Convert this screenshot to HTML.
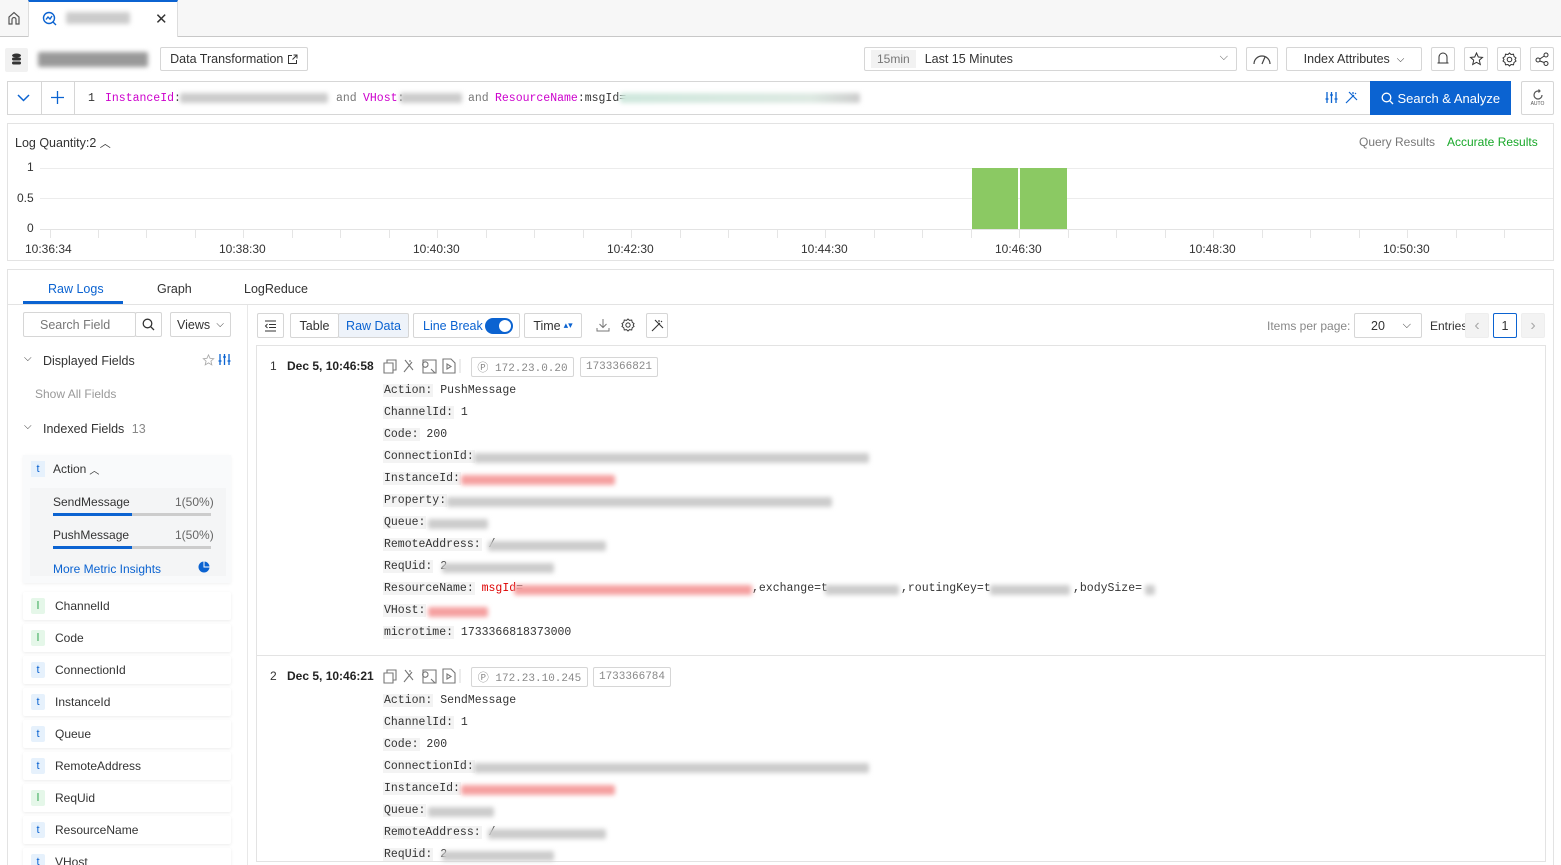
<!DOCTYPE html>
<html style="width:1561px;height:865px;overflow:hidden"><head><meta charset="utf-8"><style>
*{box-sizing:border-box;margin:0;padding:0}
body{width:1561px;height:865px;overflow:hidden;background:#fff;font-family:"Liberation Sans",sans-serif;font-size:12px;color:#333}
#w{position:relative;width:1561px;height:865px;overflow:hidden}
.a{position:absolute}
.mono{font-family:"Liberation Mono",monospace;font-size:11.5px}
.blur{position:absolute;filter:blur(2.5px);border-radius:2px}
.btn{position:absolute;border:1px solid #d6d6d6;background:#fff;border-radius:2px;display:flex;align-items:center;justify-content:center;font-size:12.5px;color:#333}
.k{background:#f3f3f3;padding:0 1px}
.ln{position:absolute;left:383px;height:20px;line-height:20px;white-space:nowrap}
.fld{position:absolute;left:23px;width:208px;height:28px;background:#fff;box-shadow:0 1px 3px rgba(0,0,0,.08);display:flex;align-items:center;font-size:12px;border-radius:2px}
.fld b{font-weight:normal;display:inline-block;width:14px;height:16px;margin:0 10px 0 8px;text-align:center;line-height:16px;font-size:11px;border-radius:2px}
.t b{background:#e6f1fc;color:#0b63d1}
.l b{background:#e5f7e9;color:#2aa34a}
.tick{position:absolute;top:230px;width:1px;height:8px;background:#e5e5e5}
.ic{position:absolute;display:flex;gap:4px}
</style></head><body><div id="w">
<!-- tab bar -->
<div class="a" style="left:0;top:0;width:1561px;height:37px;background:#f7f7f7;border-bottom:1px solid #c8c8c8"></div>
<div class="a" style="left:0;top:0;width:28px;height:36px;display:flex;align-items:center;justify-content:center">
<svg width="14" height="14" viewBox="0 0 14 14" fill="none" stroke="#555" stroke-width="1.2"><path d="M2 13V6L7 1.5L12 6V13H9V8.5A2 2 0 0 0 5 8.5V13Z"/></svg></div>
<div class="a" style="left:28px;top:0;width:150px;height:37px;background:#fff;border-top:2px solid #0b63d1;border-left:1px solid #ddd;border-right:1px solid #ddd"></div>
<svg class="a" style="left:42px;top:11px" width="16" height="16" viewBox="0 0 16 16" fill="none" stroke="#0b63d1" stroke-width="1.4"><circle cx="7" cy="7" r="5.5"/><path d="M4 8.5L6 6L8 8L10 5M11 11L14 14"/></svg>
<div class="blur" style="left:66px;top:12px;width:64px;height:12px;background:#ccc"></div>
<div class="a" style="left:155px;top:10px;font-size:15px;color:#333">✕</div>
<!-- row 2 -->
<div class="a" style="left:5px;top:48px;width:23px;height:24px;background:#f1f1f1;border-radius:2px"></div>
<svg class="a" style="left:11px;top:53px" width="11" height="14" viewBox="0 0 11 14" fill="#333"><ellipse cx="5.5" cy="2.5" rx="4.5" ry="2"/><rect x="1" y="4.5" width="9" height="3" rx="1.5"/><rect x="1" y="8.5" width="9" height="3" rx="1.5"/></svg>
<div class="blur" style="left:38px;top:52px;width:110px;height:15px;background:#999"></div>
<div class="btn" style="left:160px;top:47px;width:148px;height:24px;font-size:12.5px">Data Transformation&nbsp;<svg width="11" height="11" viewBox="0 0 11 11" fill="none" stroke="#333"><path d="M5 1.5H1.5V9.5H9.5V6M6.5 1H10V4.5M10 1L5.5 5.5"/></svg></div>
<div class="btn" style="left:864px;top:47px;width:373px;height:24px;justify-content:flex-start;padding-left:6px"><span style="background:#f2f2f2;color:#777;padding:2px 6px;font-size:12px">15min</span><span style="margin-left:9px">Last 15 Minutes</span><span style="position:absolute;right:8px;top:3px;font-size:11px;color:#555">⌵</span></div>
<div class="btn" style="left:1246px;top:47px;width:32px;height:24px"><svg width="20" height="14" viewBox="0 0 20 14" fill="none" stroke="#444" stroke-width="1.2"><path d="M2 12A8 8 0 0 1 18 12M10 12L13 5"/></svg></div>
<div class="btn" style="left:1286px;top:47px;width:136px;height:24px">Index Attributes&nbsp;&nbsp;<span style="font-size:10px">⌵</span></div>
<div class="btn" style="left:1431px;top:47px;width:24px;height:24px"><svg width="12" height="14" viewBox="0 0 12 14" fill="none" stroke="#333"><path d="M2 11V5A4 4 0 0 1 10 5V11ZM0.5 11H11.5"/></svg></div>
<div class="btn" style="left:1464px;top:47px;width:24px;height:24px"><svg width="15" height="15" viewBox="0 0 15 15" fill="none" stroke="#333"><path d="M7.5 1L9.3 5L13.5 5.4L10.3 8.2L11.3 12.5L7.5 10.3L3.7 12.5L4.7 8.2L1.5 5.4L5.7 5Z"/></svg></div>
<div class="btn" style="left:1497px;top:47px;width:24px;height:24px"><svg width="15" height="15" viewBox="0 0 15 15" fill="none" stroke="#333"><circle cx="7.5" cy="7.5" r="2.3"/><path d="M7.5 1L9 2.5L11.5 2.2L12 4.5L14 6L13 7.5L14 9L12 10.5L11.5 12.8L9 12.5L7.5 14L6 12.5L3.5 12.8L3 10.5L1 9L2 7.5L1 6L3 4.5L3.5 2.2L6 2.5Z"/></svg></div>
<div class="btn" style="left:1530px;top:47px;width:24px;height:24px"><svg width="14" height="14" viewBox="0 0 14 14" fill="none" stroke="#333"><circle cx="3" cy="8" r="2"/><circle cx="11" cy="3" r="2"/><circle cx="11" cy="11.5" r="2"/><path d="M4.8 7L9.2 4M4.8 9L9.2 10.5"/></svg></div>
<!-- query bar -->
<div class="a" style="left:7px;top:81px;width:1364px;height:34px;border:1px solid #d6d6d6;border-right:none"></div>
<div class="a" style="left:41px;top:81px;width:1px;height:34px;background:#d6d6d6"></div>
<div class="a" style="left:74px;top:81px;width:1px;height:34px;background:#d6d6d6"></div>
<svg class="a" style="left:17px;top:93px" width="13" height="10" viewBox="0 0 13 10" fill="none" stroke="#0b63d1" stroke-width="1.5"><path d="M1 2L6.5 7.5L12 2"/></svg>
<svg class="a" style="left:51px;top:91px" width="13" height="13" viewBox="0 0 13 13" fill="none" stroke="#0b63d1" stroke-width="1.3"><path d="M6.5 0V13M0 6.5H13"/></svg>
<div class="a mono" style="left:88px;top:92px;white-space:nowrap">1</div>
<div class="a mono" style="left:105px;top:92px;white-space:nowrap;color:#c0c">InstanceId<span style="color:#333">:</span></div>
<div class="a mono" style="left:336px;top:92px;color:#777">and</div>
<div class="a mono" style="left:363px;top:92px;color:#c0c">VHost<span style="color:#333">:</span></div>
<div class="a mono" style="left:468px;top:92px;color:#777">and</div>
<div class="a mono" style="left:495px;top:92px;color:#c0c">ResourceName<span style="color:#333">:msgId=</span></div>
<div class="blur" style="left:180px;top:93px;width:148px;height:10px;background:#ccc"></div>
<div class="blur" style="left:400px;top:93px;width:62px;height:10px;background:#ccc"></div>
<div class="blur" style="left:620px;top:93px;width:240px;height:10px;background:linear-gradient(90deg,#cfe8dd,#dde9e2 80%,#ccc)"></div>
<svg class="a" style="left:1325px;top:91px" width="13" height="13" viewBox="0 0 13 13" fill="none" stroke="#0b63d1" stroke-width="1.3"><path d="M2 1V12M6.5 1V12M11 1V12M0.5 8H3.5M5 4H8M9.5 8H12.5"/></svg>
<svg class="a" style="left:1345px;top:91px" width="13" height="13" viewBox="0 0 13 13" fill="none" stroke="#0b63d1" stroke-width="1.2"><path d="M1 12L9 4M4 1L12 9M8 1V3M10 2L11 3"/></svg>
<div class="a" style="left:1370px;top:81px;width:141px;height:34px;background:#0b63d1;color:#fff;font-size:13px;display:flex;align-items:center;justify-content:center"><svg width="13" height="13" viewBox="0 0 13 13" fill="none" stroke="#fff" stroke-width="1.3"><circle cx="5.5" cy="5.5" r="4.3"/><path d="M8.7 8.7L12 12"/></svg>&nbsp;Search &amp; Analyze</div>
<div class="btn" style="left:1521px;top:81px;width:33px;height:34px;flex-direction:column"><svg width="12" height="12" viewBox="0 0 12 12" fill="none" stroke="#555" stroke-width="1.2"><path d="M10 6A4 4 0 1 1 6 2H8M6.5 0.5L8 2L6.5 3.5"/></svg><span style="font-size:5px;color:#555">AUTO</span></div>
<!-- chart -->
<div class="a" style="left:7px;top:123px;width:1547px;height:138px;border:1px solid #e3e3e3"></div>
<div class="a" style="left:15px;top:135px;font-size:12.5px">Log Quantity:2 <span style="font-size:11px">︿</span></div>
<div class="a" style="left:1359px;top:135px;color:#777">Query Results</div>
<div class="a" style="left:1447px;top:135px;color:#18a829">Accurate Results</div>
<div class="a" style="left:27px;top:160px">1</div>
<div class="a" style="left:17px;top:191px">0.5</div>
<div class="a" style="left:27px;top:221px">0</div>
<div class="a" style="left:40px;top:168px;width:1513px;height:1px;background:#ececec"></div>
<div class="a" style="left:40px;top:198px;width:1513px;height:1px;background:#ececec"></div>
<div class="a" style="left:40px;top:229px;width:1513px;height:1px;background:#e3e3e3"></div>
<div class="a" style="left:972px;top:168px;width:46px;height:61px;background:#8bc963"></div>
<div class="a" style="left:1020px;top:168px;width:47px;height:61px;background:#8bc963"></div>
<div class="a" style="left:25px;top:242px;white-space:nowrap;width:1460px;font-size:12px;color:#333">
<span class="a" style="left:0">10:36:34</span><span class="a" style="left:194px">10:38:30</span><span class="a" style="left:388px">10:40:30</span><span class="a" style="left:582px">10:42:30</span><span class="a" style="left:776px">10:44:30</span><span class="a" style="left:970px">10:46:30</span><span class="a" style="left:1164px">10:48:30</span><span class="a" style="left:1358px">10:50:30</span></div>
<div class="tick" style="left:50px"></div><div class="tick" style="left:98px"></div><div class="tick" style="left:146px"></div><div class="tick" style="left:195px"></div><div class="tick" style="left:243px"></div><div class="tick" style="left:292px"></div><div class="tick" style="left:340px"></div><div class="tick" style="left:389px"></div><div class="tick" style="left:437px"></div><div class="tick" style="left:486px"></div><div class="tick" style="left:534px"></div><div class="tick" style="left:583px"></div><div class="tick" style="left:631px"></div><div class="tick" style="left:680px"></div><div class="tick" style="left:728px"></div><div class="tick" style="left:777px"></div><div class="tick" style="left:825px"></div><div class="tick" style="left:874px"></div><div class="tick" style="left:922px"></div><div class="tick" style="left:971px"></div><div class="tick" style="left:1019px"></div><div class="tick" style="left:1068px"></div><div class="tick" style="left:1116px"></div><div class="tick" style="left:1165px"></div><div class="tick" style="left:1213px"></div><div class="tick" style="left:1262px"></div><div class="tick" style="left:1310px"></div><div class="tick" style="left:1359px"></div><div class="tick" style="left:1407px"></div><div class="tick" style="left:1456px"></div><div class="tick" style="left:1504px"></div>
<!-- lower panel -->
<div class="a" style="left:7px;top:269px;width:1547px;height:620px;border:1px solid #e3e3e3"></div>
<div class="a" style="left:8px;top:304px;width:1545px;height:1px;background:#e3e3e3"></div>
<div class="a" style="left:48px;top:282px;color:#0b63d1;font-size:12.5px">Raw Logs</div>
<div class="a" style="left:23px;top:301px;width:100px;height:3px;background:#0b63d1"></div>
<div class="a" style="left:157px;top:282px;font-size:12.5px">Graph</div>
<div class="a" style="left:244px;top:282px;font-size:12.5px">LogReduce</div>
<div class="a" style="left:247px;top:305px;width:1px;height:560px;background:#e8e8e8"></div>
<!-- sidebar -->
<div class="btn" style="left:23px;top:312px;width:113px;height:25px;justify-content:flex-start;padding-left:16px;color:#777">Search Field</div>
<div class="btn" style="left:135px;top:312px;width:27px;height:25px"><svg width="13" height="13" viewBox="0 0 13 13" fill="none" stroke="#333" stroke-width="1.3"><circle cx="5.5" cy="5.5" r="4.3"/><path d="M8.7 8.7L12 12"/></svg></div>
<div class="btn" style="left:170px;top:312px;width:61px;height:25px;justify-content:space-between;padding:0 6px">Views <span style="font-size:10px">⌵</span></div>
<div class="a" style="left:24px;top:353px;font-size:10px">⌵</div>
<div class="a" style="left:43px;top:354px;font-size:12.5px">Displayed Fields</div>
<svg class="a" style="left:202px;top:354px" width="13" height="13" viewBox="0 0 15 15" fill="none" stroke="#aaa"><path d="M7.5 1L9.3 5L13.5 5.4L10.3 8.2L11.3 12.5L7.5 10.3L3.7 12.5L4.7 8.2L1.5 5.4L5.7 5Z"/></svg>
<svg class="a" style="left:218px;top:353px" width="13" height="13" viewBox="0 0 13 13" fill="none" stroke="#0b63d1" stroke-width="1.3"><path d="M2 1V12M6.5 1V12M11 1V12M0.5 8H3.5M5 4H8M9.5 8H12.5"/></svg>
<div class="a" style="left:35px;top:387px;color:#999">Show All Fields</div>
<div class="a" style="left:24px;top:421px;font-size:10px">⌵</div>
<div class="a" style="left:43px;top:422px;font-size:12.5px">Indexed Fields <span style="color:#888;margin-left:4px">13</span></div>
<div class="a" style="left:23px;top:455px;width:208px;height:128px;background:#f9fafb;box-shadow:0 1px 3px rgba(0,0,0,.06)"></div>
<div class="a" style="left:23px;top:458px;width:208px;height:22px;display:flex;align-items:center"><span style="display:inline-block;width:14px;height:16px;margin:0 8px 0 8px;text-align:center;line-height:16px;font-size:11px;background:#e6f1fc;color:#0b63d1">t</span>Action <span style="font-size:10px;margin-left:3px">︿</span></div>
<div class="a" style="left:30px;top:488px;width:196px;height:88px;background:#f4f5f6"></div>
<div class="a" style="left:53px;top:495px">SendMessage</div><div class="a" style="left:175px;top:495px;color:#666">1(50%)</div>
<div class="a" style="left:53px;top:513px;width:158px;height:3px;background:#ccc"></div><div class="a" style="left:53px;top:513px;width:79px;height:3px;background:#0b63d1"></div>
<div class="a" style="left:53px;top:528px">PushMessage</div><div class="a" style="left:175px;top:528px;color:#666">1(50%)</div>
<div class="a" style="left:53px;top:546px;width:158px;height:3px;background:#ccc"></div><div class="a" style="left:53px;top:546px;width:79px;height:3px;background:#0b63d1"></div>
<div class="a" style="left:53px;top:562px;color:#0b63d1">More Metric Insights</div>
<svg class="a" style="left:198px;top:561px" width="12" height="12" viewBox="0 0 12 12"><circle cx="6" cy="6" r="5.5" fill="#0b63d1"/><path d="M6 0.5V6H11.5" stroke="#fff" fill="none"/></svg>
<div class="fld l" style="top:592px"><b>l</b>ChannelId</div>
<div class="fld l" style="top:624px"><b>l</b>Code</div>
<div class="fld t" style="top:656px"><b>t</b>ConnectionId</div>
<div class="fld t" style="top:688px"><b>t</b>InstanceId</div>
<div class="fld t" style="top:720px"><b>t</b>Queue</div>
<div class="fld t" style="top:752px"><b>t</b>RemoteAddress</div>
<div class="fld l" style="top:784px"><b>l</b>ReqUid</div>
<div class="fld t" style="top:816px"><b>t</b>ResourceName</div>
<div class="fld t" style="top:848px"><b>t</b>VHost</div>
<!-- toolbar -->
<div class="btn" style="left:257px;top:313px;width:27px;height:25px"><svg width="13" height="12" viewBox="0 0 13 12" fill="none" stroke="#333"><path d="M1 1H12M5 4.5H12M5 7.5H12M1 11H12M3.5 4L1.5 6L3.5 8"/></svg></div>
<div class="btn" style="left:290px;top:313px;width:49px;height:25px">Table</div>
<div class="btn" style="left:338px;top:313px;width:71px;height:25px;background:#eef3fa;color:#0b63d1">Raw Data</div>
<div class="btn" style="left:413px;top:313px;width:107px;height:25px;color:#0b63d1;justify-content:flex-start;padding-left:9px">Line Break<span style="display:inline-block;margin-left:2px;width:28px;height:16px;border-radius:8px;background:#0b63d1;position:relative"><span style="position:absolute;right:2px;top:2px;width:12px;height:12px;border-radius:6px;background:#fff"></span></span></div>
<div class="btn" style="left:524px;top:313px;width:58px;height:25px">Time <span style="color:#0b63d1;font-size:9px;margin-left:3px">▴▾</span></div>
<svg class="a" style="left:596px;top:318px" width="14" height="14" viewBox="0 0 14 14" fill="none" stroke="#777"><path d="M7 1V9M3.5 6L7 9.5L10.5 6M1 10V13H13V10"/></svg>
<svg class="a" style="left:621px;top:318px" width="14" height="14" viewBox="0 0 15 15" fill="none" stroke="#333"><circle cx="7.5" cy="7.5" r="2.3"/><path d="M7.5 1L9 2.5L11.5 2.2L12 4.5L14 6L13 7.5L14 9L12 10.5L11.5 12.8L9 12.5L7.5 14L6 12.5L3.5 12.8L3 10.5L1 9L2 7.5L1 6L3 4.5L3.5 2.2L6 2.5Z"/></svg>
<div class="btn" style="left:646px;top:313px;width:22px;height:25px"><svg width="13" height="13" viewBox="0 0 13 13" fill="none" stroke="#333" stroke-width="1.1"><path d="M1 12L9 4M4 1L12 9M8 1V3M10 2L11 3"/></svg></div>
<div class="a" style="left:1267px;top:319px;color:#888">Items per page:</div>
<div class="btn" style="left:1354px;top:313px;width:68px;height:25px;justify-content:space-between;padding:0 10px 0 16px">20 <span style="font-size:11px">⌵</span></div>
<div class="a" style="left:1430px;top:319px">Entries</div>
<div class="btn" style="left:1465px;top:313px;width:24px;height:25px;background:#f3f3f3;border-color:#eee;color:#aaa;font-size:16px">‹</div>
<div class="btn" style="left:1493px;top:313px;width:24px;height:25px;border-color:#0b63d1">1</div>
<div class="btn" style="left:1521px;top:313px;width:24px;height:25px;background:#f3f3f3;border-color:#eee;color:#aaa;font-size:16px">›</div>
<!-- logs area -->
<div class="a" style="left:256px;top:345px;width:1290px;height:517px;border:1px solid #e3e3e3"></div>
<div class="a" style="left:257px;top:655px;width:1288px;height:1px;background:#e3e3e3"></div>

<div class="a" style="left:270px;top:359px">1</div>
<div class="a" style="left:287px;top:359px;font-weight:bold;color:#222">Dec 5, 10:46:58</div>
<svg class="ic" style="left:383px;top:358px" width="78" height="16" viewBox="0 0 78 16" fill="none" stroke="#777" stroke-width="1.1"><path d="M1 5H10V15H1Z M4 5V2H13V12H10"/><path d="M21 14L29 4M22 2L30 12M27 2V4"/><path d="M40 2H53V15H40ZM45 6.5A2.7 2.7 0 1 0 45 6.6M48 11L52 15"/><path d="M60 1H68L72 5V15H60ZM64 6V11L68 8.5Z"/><path d="M77 1V15" stroke="#ddd"/></svg>
<div class="btn mono" style="left:471px;top:357px;width:103px;height:20px;color:#888;font-size:11px">Ⓟ 172.23.0.20</div>
<div class="btn mono" style="left:580px;top:357px;width:78px;height:20px;color:#888;font-size:11px">1733366821</div>
<div class="ln mono" style="top:381px"><span class="k">Action:</span> PushMessage</div>
<div class="ln mono" style="top:403px"><span class="k">ChannelId:</span> 1</div>
<div class="ln mono" style="top:425px"><span class="k">Code:</span> 200</div>
<div class="ln mono" style="top:447px"><span class="k">ConnectionId:</span></div>
<div class="blur" style="left:474px;top:453px;width:395px;height:10px;background:#ccc"></div>
<div class="ln mono" style="top:469px"><span class="k">InstanceId:</span></div>
<div class="blur" style="left:461px;top:475px;width:154px;height:10px;background:#f5a0a0"></div>
<div class="ln mono" style="top:491px"><span class="k">Property:</span></div>
<div class="blur" style="left:447px;top:497px;width:385px;height:10px;background:#ccc"></div>
<div class="ln mono" style="top:513px"><span class="k">Queue:</span></div>
<div class="blur" style="left:428px;top:519px;width:60px;height:10px;background:#ccc"></div>
<div class="ln mono" style="top:535px"><span class="k">RemoteAddress:</span> /</div>
<div class="blur" style="left:488px;top:541px;width:118px;height:10px;background:#ccc"></div>
<div class="ln mono" style="top:557px"><span class="k">ReqUid:</span> 2</div>
<div class="blur" style="left:442px;top:563px;width:112px;height:10px;background:#ccc"></div>
<div class="ln mono" style="top:579px"><span class="k">ResourceName:</span> <span style="color:#d00">msgId</span>=</div>
<div class="a mono" style="left:752px;top:579px;line-height:20px">,exchange=t</div>
<div class="a mono" style="left:901px;top:579px;line-height:20px">,routingKey=t</div>
<div class="a mono" style="left:1073px;top:579px;line-height:20px">,bodySize=</div>
<div class="blur" style="left:514px;top:585px;width:238px;height:10px;background:#f5a0a0"></div>
<div class="blur" style="left:825px;top:585px;width:74px;height:10px;background:#ccc"></div>
<div class="blur" style="left:990px;top:585px;width:80px;height:10px;background:#ccc"></div>
<div class="blur" style="left:1145px;top:585px;width:10px;height:10px;background:#ccc"></div>
<div class="ln mono" style="top:601px"><span class="k">VHost:</span></div>
<div class="blur" style="left:428px;top:607px;width:60px;height:10px;background:#f5a0a0"></div>
<div class="ln mono" style="top:623px"><span class="k">microtime:</span> 1733366818373000</div>

<div class="a" style="left:270px;top:669px">2</div>
<div class="a" style="left:287px;top:669px;font-weight:bold;color:#222">Dec 5, 10:46:21</div>
<svg class="ic" style="left:383px;top:668px" width="78" height="16" viewBox="0 0 78 16" fill="none" stroke="#777" stroke-width="1.1"><path d="M1 5H10V15H1Z M4 5V2H13V12H10"/><path d="M21 14L29 4M22 2L30 12M27 2V4"/><path d="M40 2H53V15H40ZM45 6.5A2.7 2.7 0 1 0 45 6.6M48 11L52 15"/><path d="M60 1H68L72 5V15H60ZM64 6V11L68 8.5Z"/><path d="M77 1V15" stroke="#ddd"/></svg>
<div class="btn mono" style="left:471px;top:667px;width:117px;height:20px;color:#888;font-size:11px">Ⓟ 172.23.10.245</div>
<div class="btn mono" style="left:593px;top:667px;width:78px;height:20px;color:#888;font-size:11px">1733366784</div>
<div class="ln mono" style="top:691px"><span class="k">Action:</span> SendMessage</div>
<div class="ln mono" style="top:713px"><span class="k">ChannelId:</span> 1</div>
<div class="ln mono" style="top:735px"><span class="k">Code:</span> 200</div>
<div class="ln mono" style="top:757px"><span class="k">ConnectionId:</span></div>
<div class="blur" style="left:474px;top:763px;width:395px;height:10px;background:#ccc"></div>
<div class="ln mono" style="top:779px"><span class="k">InstanceId:</span></div>
<div class="blur" style="left:461px;top:785px;width:154px;height:10px;background:#f5a0a0"></div>
<div class="ln mono" style="top:801px"><span class="k">Queue:</span></div>
<div class="blur" style="left:428px;top:807px;width:66px;height:10px;background:#ccc"></div>
<div class="ln mono" style="top:823px"><span class="k">RemoteAddress:</span> /</div>
<div class="blur" style="left:488px;top:829px;width:118px;height:10px;background:#ccc"></div>
<div class="ln mono" style="top:845px"><span class="k">ReqUid:</span> 2</div>
<div class="blur" style="left:442px;top:851px;width:112px;height:10px;background:#ccc"></div>
</div></body></html>
